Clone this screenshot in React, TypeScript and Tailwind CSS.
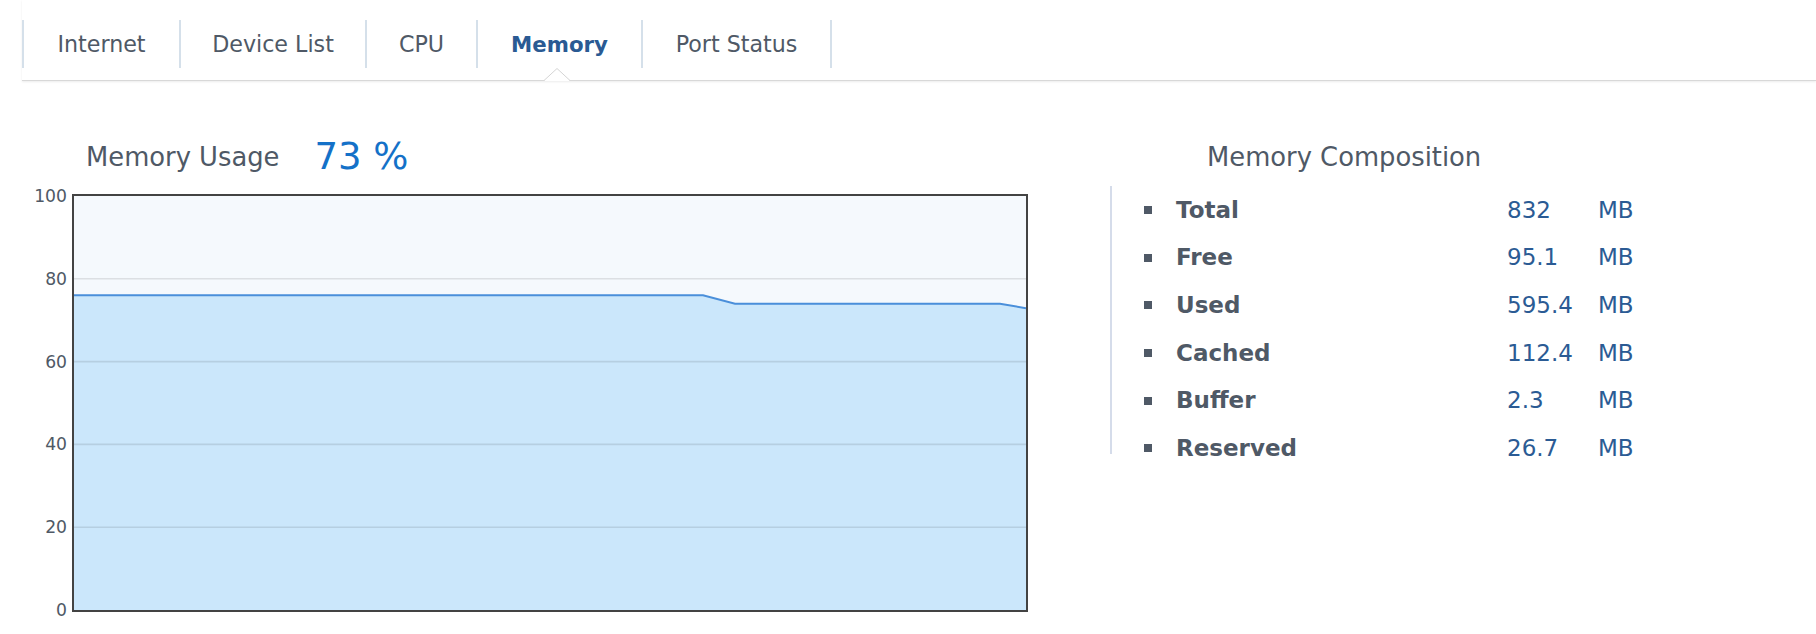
const tabs = [
  { label: "Internet", width: "w-[157px]" },
  { label: "Device List", width: "w-[186px]" },
  { label: "CPU", width: "w-[111px]" },
  { label: "Memory", width: "w-[165px]", active: true },
  { label: "Port Status", width: "w-[191px] border-r-2" },
];

const composition = [
  { label: "Total", value: "832" },
  { label: "Free", value: "95.1" },
  { label: "Used", value: "595.4" },
  { label: "Cached", value: "112.4" },
  { label: "Buffer", value: "2.3" },
  { label: "Reserved", value: "26.7" },
];

const yTicks = ["100", "80", "60", "40", "20", "0"];

// plot area inside the border is 952 x 414, value 100 at top
const W = 952;
const H = 414;
const y = (v: number) => H * (1 - v / 100);
const points: [number, number][] = [
  [0, 76],
  [629, 76],
  [661, 74],
  [926, 74],
  [952, 72.9],
];

const MemoryChart = () => {
  const line = points.map(([x, v]) => `${x},${y(v)}`).join(" ");
  return (
    <svg width={W} height={H} viewBox={`0 0 ${W} ${H}`} className="block">
      <rect x={0} y={0} width={W} height={H} fill="#f5f9fd" />
      <polygon points={`0,${H} ${line} ${W},${H}`} fill="#cbe7fb" />
      {[80, 60, 40, 20].map((v) => (
        <line
          key={v}
          x1={0}
          x2={W}
          y1={y(v)}
          y2={y(v)}
          stroke="rgba(0,0,0,0.1)"
          strokeWidth={1.6}
        />
      ))}
      <polyline points={line} fill="none" stroke="#4a8fda" strokeWidth={2} />
    </svg>
  );
};

export default function App() {
  return (
    <div className="h-[634px] w-full overflow-hidden bg-white font-['DejaVu_Sans',Verdana,sans-serif] text-[#4f5966]">
      {/* Tabs */}
      <div className="relative ml-[22px] pt-[20px] pb-[12px] border-b border-[#d8d8d8] shadow-[0_1px_2px_rgba(0,0,0,0.08)]">
        <div className="flex">
          {tabs.map((t) => (
            <div
              key={t.label}
              className={`${t.width} h-[48px] pt-[2px] flex items-center justify-center border-l-2 border-[#d5e0ea] whitespace-nowrap ${
                t.active ? "text-[21.3px] font-bold text-[#2a5a93]" : "text-[22.2px]"
              }`}
            >
              {t.label}
            </div>
          ))}
        </div>
        <svg
          width="26"
          height="13"
          viewBox="0 0 26 13"
          className="absolute left-[522px] top-[68px]"
        >
          <polygon points="0,13 13,0.5 26,13" fill="white" />
          <polyline points="0,12.5 13,0.5 26,12.5" fill="none" stroke="#d4d4d4" strokeWidth="1" />
        </svg>
      </div>

      <div className="flex">
        {/* Memory usage */}
        <div className="w-[1110px] shrink-0">
          <div className="mt-[54px] h-[44px] flex items-center pl-[86px]">
            <span className="text-[25.8px]">Memory Usage</span>
            <span className="ml-[35px] text-[37px] text-[#1471c8]">73 %</span>
          </div>
          <div className="mt-[7px] flex">
            <div className="w-[67px] h-[434px] flex flex-col justify-between text-right text-[17.2px] leading-[20px]">
              {yTicks.map((t) => (
                <span key={t}>{t}</span>
              ))}
            </div>
            <div className="ml-[5px] mt-[8px] w-[956px] h-[418px] border-2 border-[#434343]">
              <MemoryChart />
            </div>
          </div>
        </div>

        {/* Memory composition */}
        <div className="flex-1">
          <div className="mt-[54px] h-[44px] flex items-center pl-[97px] text-[25.8px]">
            Memory Composition
          </div>
          <div className="mt-[7px] flex">
            <div className="w-[2px] h-[268px] bg-[#d5dcea]" />
            <ul className="pl-[32px]">
              {composition.map((row) => (
                <li key={row.label} className="h-[47.7px] flex items-center text-[23px]">
                  <span className="w-[8px] h-[8px] bg-[#4f5966]" />
                  <span className="ml-[24px] w-[331px] font-bold">{row.label}</span>
                  <span className="w-[91px] text-[#2b5b94]">{row.value}</span>
                  <span className="text-[#2b5b94]">MB</span>
                </li>
              ))}
            </ul>
          </div>
        </div>
      </div>
    </div>
  );
}
